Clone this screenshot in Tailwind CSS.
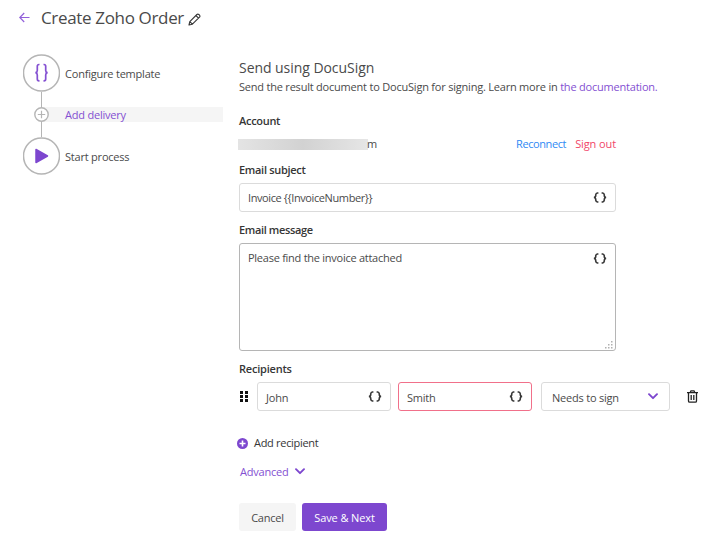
<!DOCTYPE html>
<html lang="en">
<head>
<meta charset="utf-8">
<title>Create Zoho Order</title>
<script src="https://cdn.jsdelivr.net/npm/@tailwindcss/browser@4"></script>
</head>
<body class="w-[705px] h-[539px] overflow-hidden bg-white font-['Open_Sans','Noto_Sans',sans-serif] text-[11px] leading-[18px] tracking-[-0.21px] text-[#4a4a4a] whitespace-nowrap">
<svg class="hidden">
  <symbol id="braces" viewBox="0 0 14 11"><path d="M5.400 1H4.400Q3 1.200 2.700 2.800V4Q2.500 5.200 1 5.500Q2.500 5.800 2.700 7V8.200Q3 9.800 4.400 10H5.400M8.600 1H9.600Q11 1.200 11.300 2.800V4Q11.500 5.200 13 5.500Q11.500 5.800 11.300 7V8.200Q11 9.800 9.600 10H8.600" fill="none" stroke="#363636" stroke-width="1.600"/></symbol>
  <symbol id="chevron" viewBox="0 0 10 7"><path d="M1 1.200L5 5.200L9 1.200" fill="none" stroke="#7d47cf" stroke-width="1.900" stroke-linecap="round" stroke-linejoin="round"/></symbol>
</svg>
<header class="flex h-9 items-center pl-[19px]">
  <svg class="mr-[11px] -mt-0.5 h-[11px] w-[11px]" viewBox="0 0 11 11"><path d="M5.200 1L.8 5.500L5.200 10M1 5.500H10.500" fill="none" stroke="#9260da" stroke-width="1.200"/></svg>
  <h1 class="w-[147px] text-[17px] leading-6 tracking-[-0.34px]">Create Zoho Order</h1>
  <svg class="mt-[3px] h-[13px] w-[13px]" viewBox="0 0 13 13"><path d="M1 12L1.800 8.600L8.900 1.500Q9.800.6 10.800 1.500L11.500 2.200Q12.400 3.200 11.500 4.100L4.400 11.200ZM7.900 2.500L10.500 5.100M1.800 8.600L4.400 11.200" fill="none" stroke="#363636" stroke-width="1.100" stroke-linejoin="round"/></svg>
</header>
<main class="flex pl-[23px]">
  <nav class="flex w-[200px] flex-col pt-[18px]">
    <div class="flex h-[38px] items-center">
      <svg class="h-[38px] w-[37px] shrink-0" viewBox="0 0 37 38"><circle cx="18.500" cy="19" r="18" fill="#fff" stroke="#b5b5b5" stroke-width="1.500"/><path d="M16.500 10.500H16Q14.300 10.500 14.300 12.300V16.400Q14.300 18.300 12.500 18.700Q14.300 19.100 14.300 21V25Q14.300 26.800 16 26.800H16.500M20.500 10.500H21Q22.700 10.500 22.700 12.300V16.400Q22.700 18.300 24.500 18.700Q22.700 19.100 22.700 21V25Q22.700 26.800 21 26.800H20.500" fill="none" stroke="#8450d2" stroke-width="1.700"/></svg>
      <span class="ml-[5px] pt-[2px]">Configure template</span>
    </div>
    <div class="flex h-[45px] items-center">
      <svg class="h-[45px] w-[26px] shrink-0" viewBox="0 0 26 45"><path d="M18.500 0V45" stroke="#b5b5b5"/><path d="M18.500 15H26V30H18.500Z" fill="#f5f5f5"/><circle cx="18.500" cy="22.500" r="6.700" fill="#fff" stroke="#b5b5b5" stroke-width="1.400"/><path d="M14.800 22.500H22.200M18.500 18.800V26.200" stroke="#b5b5b5" stroke-width="1.200"/></svg>
      <div class="h-[15px] flex-1 bg-[#f5f5f5] pl-[16px] leading-[16px] text-[#8450d2]">Add delivery</div>
    </div>
    <div class="flex h-[38px] items-center">
      <svg class="h-[38px] w-[37px] shrink-0" viewBox="0 0 37 38"><circle cx="18.500" cy="19" r="18" fill="#fff" stroke="#b5b5b5" stroke-width="1.500"/><path d="M13 12.500L24.500 19L13 25.500Z" fill="#7d47cf" stroke="#7d47cf" stroke-width="1.500" stroke-linejoin="round"/></svg>
      <span class="ml-[5px] pt-[2px]">Start process</span>
    </div>
  </nav>
  <section class="ml-[16px] flex w-[466px] flex-col pt-[22px]">
    <h2 class="h-5 text-[14px] leading-5 tracking-[-0.05px]">Send using DocuSign</h2>
    <p>Send the result document to DocuSign for signing. Learn more in <a class="text-[#8450d2]">the documentation.</a></p>
    <h3 class="mt-[16px] font-semibold tracking-[-0.3px] text-[#363636]">Account</h3>
    <div class="mt-1 flex h-5 w-[377px] items-center">
      <span class="-ml-px h-[11px] w-[130px] bg-linear-to-r from-[#e4e4e4] via-[#d2d2d2] to-[#e6e6e6]"></span><span class="-ml-px">m</span>
      <a class="ml-auto tracking-[-0.4px] text-[#2f89f4]">Reconnect</a><a class="ml-[9px] tracking-[-0.1px] text-[#f14668]">Sign out</a>
    </div>
    <h3 class="mt-[7px] font-semibold tracking-[-0.3px] text-[#363636]">Email subject</h3>
    <div class="mt-1 flex h-[29px] w-[377px] items-center justify-between rounded-[3px] border border-[#dbdbdb] pr-[8px] pl-2">
      <span class="pt-px tracking-[-0.4px]">Invoice {{InvoiceNumber}}</span><svg class="h-[11px] w-[14px]"><use href="#braces"/></svg>
    </div>
    <h3 class="mt-[9px] font-semibold tracking-[-0.36px] text-[#363636]">Email message</h3>
    <div class="mt-1 flex h-[108px] w-[377px] flex-col justify-between rounded-[3px] border border-[#b5b5b5] pt-[5px] pr-[8px] pl-2">
      <div class="flex items-center justify-between"><span class="tracking-[-0.26px]">Please find the invoice attached</span><svg class="h-[11px] w-[14px]"><use href="#braces"/></svg></div>
      <svg class="-mr-[6px] mb-px h-2 w-2 self-end" viewBox="0 0 8 8"><path d="M6 0h1.500v1.500H6zM3 3h1.500v1.500H3zM6 3h1.500v1.500H6zM0 6h1.500v1.500H0zM3 6h1.500v1.500H3zM6 6h1.500v1.500H6z" fill="#b0b0b0"/></svg>
    </div>
    <h3 class="mt-[9px] font-semibold text-[#363636]">Recipients</h3>
    <div class="mt-1 flex h-[29px] items-center">
      <svg class="ml-px h-[11px] w-2" viewBox="0 0 8 11"><path d="M0 0h3v3H0zM5 0h3v3H5zM0 4h3v3H0zM5 4h3v3H5zM0 8h3v3H0zM5 8h3v3H5z" fill="#111"/></svg>
      <div class="ml-[9px] flex h-full w-[134px] items-center justify-between rounded-[3px] border border-[#dbdbdb] px-2"><span class="pt-[2px]">John</span><svg class="h-[11px] w-[14px]"><use href="#braces"/></svg></div>
      <div class="ml-[7px] flex h-full w-[134px] items-center justify-between rounded-[3px] border border-[#f1708a] px-2"><span class="pt-[2px]">Smith</span><svg class="h-[11px] w-[14px]"><use href="#braces"/></svg></div>
      <div class="ml-[9px] flex h-full w-[129px] items-center justify-between rounded-[3px] border border-[#dbdbdb] pr-[11px] pl-[10px]"><span class="pt-[2px]">Needs to sign</span><svg class="h-[7px] w-[10px]"><use href="#chevron"/></svg></div>
      <svg class="ml-[17px] h-[13px] w-[11px]" viewBox="0 0 11 13"><path d="M0 2.600H11M3.200 2.500L4 .8H7L7.800 2.500M1.500 3V11Q1.500 12.200 2.700 12.200H8.300Q9.500 12.200 9.500 11V3M4.200 5V10M6.800 5V10" fill="none" stroke="#222" stroke-width="1.300"/></svg>
    </div>
    <div class="mt-[23px] -ml-[2px] flex items-center text-[#363636]">
      <svg class="mr-[6px] h-[11px] w-[11px]" viewBox="0 0 11 11"><circle cx="5.500" cy="5.500" r="5.500" fill="#7d47cf"/><path d="M2.500 5.500H8.500M5.500 2.500V8.500" stroke="#fff" stroke-width="1.600"/></svg>
      <span class="tracking-[-0.3px]">Add recipient</span>
    </div>
    <div class="mt-[11px] ml-px flex items-center text-[#8450d2]"><span>Advanced</span><svg class="ml-[6px] -mt-0.5 h-[7px] w-[10px]"><use href="#chevron"/></svg></div>
    <div class="mt-[22px] flex h-7 gap-[6px] leading-[29px]">
      <button class="w-[57px] rounded-[3px] bg-[#f5f5f5]">Cancel</button>
      <button class="w-[85px] rounded-[3px] bg-[#7d47cf] tracking-[-0.1px] text-white">Save &amp; Next</button>
    </div>
  </section>
</main>
</body>
</html>
